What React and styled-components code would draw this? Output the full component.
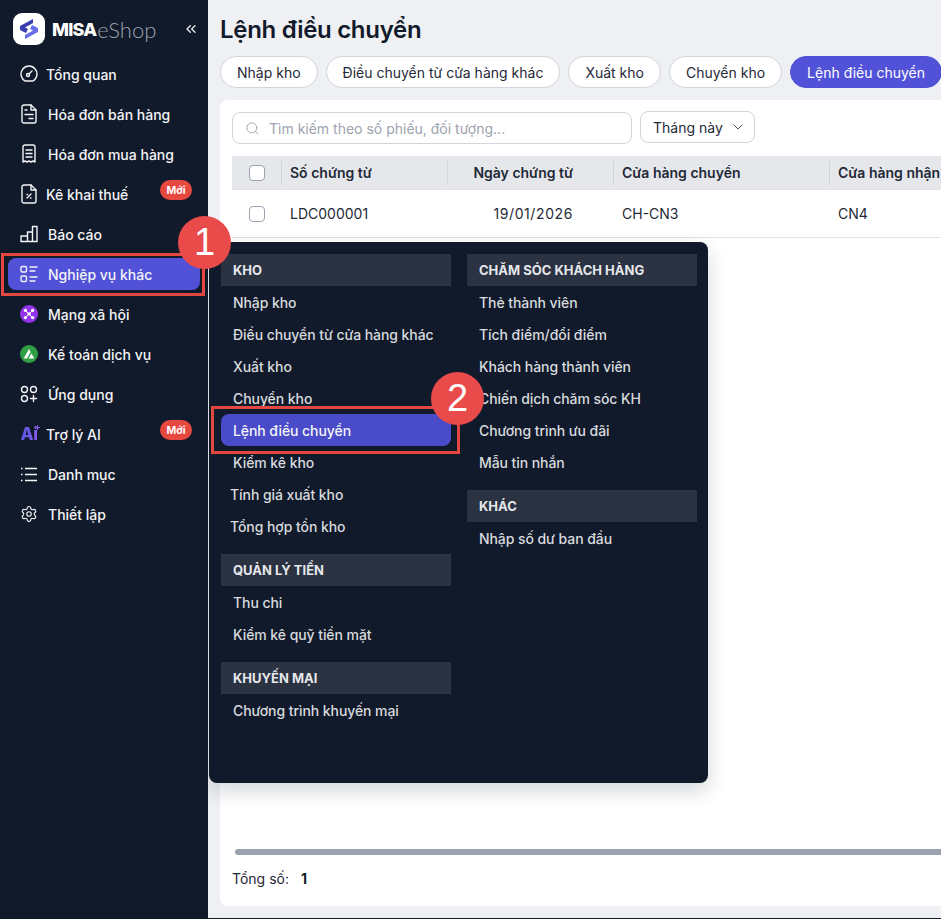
import React from "react";
import styled, { createGlobalStyle } from "styled-components";
import { ChevronDown, ChevronsLeft, Search, Settings } from "lucide-react";

const GlobalStyle = createGlobalStyle`
  html, body { margin: 0; padding: 0; background: #111a2b; }
  body { font-family: Inter, "Noto Sans", "Liberation Sans", sans-serif; overflow: hidden; }
  * { box-sizing: border-box; }
`;

const Page = styled.div`
  position: relative;
  display: flex;
  width: 941px;
  height: 919px;
  overflow: hidden;
  background: #111a2b;
`;

/* sidebar */
const Sidebar = styled.aside`
  width: 208px;
  flex: none;
  background: #111a2b;
  display: flex;
  flex-direction: column;
`;

const Brand = styled.div`
  height: 54px;
  padding: 13px 0 0 13px;
  display: flex;
  align-items: flex-start;
`;

const LogoBox = styled.div`
  width: 32px;
  height: 32px;
  border-radius: 9px;
  background: #fff;
  display: flex;
  align-items: center;
  justify-content: center;
  flex: none;
`;

const BrandName = styled.div`
  margin-left: 7px;
  height: 32px;
  display: flex;
  align-items: center;
  color: #fff;
  font-size: 18px;
  font-weight: 800;
  letter-spacing: -0.8px;
`;

const BrandLight = styled.span`
  margin-left: 1px;
  color: #9aa0aa;
  font-family: Lato, Inter, sans-serif;
  font-weight: 300;
  font-size: 22px;
  letter-spacing: 0;
`;

const Collapse = styled.div`
  margin-left: auto;
  margin-right: 9px;
  height: 32px;
  display: flex;
  align-items: center;
  color: #e5e7eb;
`;

const Nav = styled.nav`
  display: flex;
  flex-direction: column;
`;

const NavRow = styled.div`
  position: relative;
  height: 40px;
  padding: 4px 8px;
`;

const NavInner = styled.div`
  height: 32px;
  display: flex;
  align-items: center;
  padding-left: 12px;
  border-radius: 8px;
  color: #f3f4f6;
  font-size: 14px;
  font-weight: 500;
  background: ${(p) => (p.$active ? "#5152d8" : "transparent")};
`;

const NavIcon = styled.span`
  width: 18px;
  height: 20px;
  flex: none;
  display: flex;
  align-items: center;
  justify-content: center;
  margin-right: ${(p) => (p.$tight ? "8px" : "10px")};
`;

const NewBadge = styled.span`
  position: absolute;
  top: 6px;
  left: 160px;
  width: 32px;
  height: 20px;
  border-radius: 10px;
  background: #e8493f;
  color: #fff;
  font-size: 10.5px;
  font-weight: 700;
  display: flex;
  align-items: center;
  justify-content: center;
`;

const AiMark = styled.span`
  position: relative;
  font-size: 17px;
  font-weight: 800;
  letter-spacing: -0.5px;
  background: linear-gradient(90deg, #5558e0, #8b5cf0);
  -webkit-background-clip: text;
  background-clip: text;
  color: transparent;
`;

const AiSpark = styled.span`
  position: absolute;
  right: -3px;
  top: 1px;
  width: 5px;
  height: 5px;
  background:
    linear-gradient(#8b5cf0, #8b5cf0) center / 5px 1px no-repeat,
    linear-gradient(#8b5cf0, #8b5cf0) center / 1px 5px no-repeat;
`;

/* main */
const Main = styled.main`
  flex: none;
  width: 733px;
  height: 918px;
  background: #eff0f4;
  padding: 0 0 12px 12px;
  display: flex;
  flex-direction: column;
`;

const Title = styled.h1`
  margin: 0;
  height: 56px;
  padding-top: 15px;
  font-size: 24px;
  line-height: 30px;
  font-weight: 600;
  letter-spacing: -0.3px;
  color: #111a2b;
`;

const Tabs = styled.div`
  display: flex;
  gap: 8px;
  height: 32px;
  margin-bottom: 12px;
  white-space: nowrap;
`;

const Tab = styled.div`
  height: 32px;
  padding: 0 16px;
  border-radius: 16px;
  display: flex;
  align-items: center;
  font-size: 14px;
  font-weight: 400;
  flex: none;
  color: ${(p) => (p.$active ? "#fff" : "#1f2937")};
  background: ${(p) => (p.$active ? "#5152d8" : "#fff")};
  border: 1px solid ${(p) => (p.$active ? "#5152d8" : "#d1d5db")};
`;

const Panel = styled.section`
  flex: 1;
  width: 1000px;
  background: #fff;
  border-radius: 8px;
  padding: 12px;
  display: flex;
  flex-direction: column;
`;

const Toolbar = styled.div`
  display: flex;
  gap: 8px;
  height: 33px;
  margin-bottom: 11px;
`;

const SearchBox = styled.div`
  width: 400px;
  height: 32px;
  border: 1px solid #d1d5db;
  border-radius: 8px;
  display: flex;
  align-items: center;
  padding-left: 12px;
  gap: 9px;
  color: #9ca3af;
  font-size: 14px;
`;

const Period = styled.div`
  width: 115px;
  height: 32px;
  margin-top: -1px;
  border: 1px solid #d1d5db;
  border-radius: 8px;
  display: flex;
  align-items: center;
  padding-left: 12px;
  gap: 7px;
  font-size: 14px;
  color: #1f2937;
`;

const Row = styled.div`
  display: grid;
  grid-template-columns: 49px 166px 166px 216px 1fr;
  align-items: center;
  height: ${(p) => (p.$head ? "34px" : "48px")};
  background: ${(p) => (p.$head ? "#e5e7eb" : "#fff")};
  border-bottom: 1px solid #e0e2e6;
  font-size: 14px;
  color: #1f2937;
  font-weight: ${(p) => (p.$head ? 600 : 400)};
  white-space: nowrap;
`;

const Cell = styled.div`
  height: ${(p) => (p.$head ? "24px" : "auto")};
  display: flex;
  align-items: center;
  padding-left: 8px;
  border-left: ${(p) => (p.$head ? "1px solid #d1d5db" : "1px solid transparent")};
  justify-content: ${(p) => (p.$right ? "flex-end" : "flex-start")};
  padding-right: ${(p) => (p.$right ? "40px" : "0")};
  letter-spacing: ${(p) => (p.$wide ? "0.6px" : "0")};
`;

const CheckCell = styled.div`
  display: flex;
  justify-content: center;
`;

const Check = styled.span`
  width: 16px;
  height: 16px;
  border: 1px solid #9ca3af;
  border-radius: 4px;
  background: #fff;
`;

const Spacer = styled.div`
  flex: 1;
`;

const Scrollbar = styled.div`
  height: 6px;
  margin: 0 0 0 3px;
  background: #9ca3af;
  border-radius: 3px;
`;

const Total = styled.div`
  height: 39px;
  padding-top: 14px;
  font-size: 14px;
  color: #1f2937;
  display: flex;
  align-items: flex-start;
  line-height: 20px;
  gap: 12px;
`;

const TotalValue = styled.b`
  font-weight: 700;
  color: #111a2b;
`;

/* flyout menu */
const Flyout = styled.div`
  position: absolute;
  left: 209px;
  top: 242px;
  width: 499px;
  height: 541px;
  background: #111a2b;
  border-radius: 8px;
  box-shadow: 0 8px 20px rgba(17, 26, 43, 0.18);
  padding: 12px 11px 0 12px;
  display: grid;
  grid-template-columns: 230px 230px;
  column-gap: 16px;
  align-items: start;
`;

const MenuColumn = styled.div`
  display: flex;
  flex-direction: column;
  gap: 12px;
`;

const MenuGroup = styled.div`
  display: flex;
  flex-direction: column;
`;

const GroupTitle = styled.div`
  height: 32px;
  padding-left: 12px;
  display: flex;
  align-items: center;
  background: #2b3242;
  color: #e5e7eb;
  font-size: 13px;
  font-weight: 700;
`;

const MenuItem = styled.div`
  height: 32px;
  padding-left: ${(p) => (p.$shift ? "9px" : "12px")};
  display: flex;
  align-items: center;
  font-size: 14px;
  font-weight: 500;
  letter-spacing: -0.07px;
  color: ${(p) => (p.$active ? "#f3f4f6" : "#d8dade")};
  background: ${(p) => (p.$active ? "#4a4bc8" : "transparent")};
  border-radius: 8px;
  white-space: nowrap;
`;

/* annotations laid over the screenshot */
const Callout = styled.div`
  position: absolute;
  left: ${(p) => p.$x}px;
  top: ${(p) => p.$y}px;
  width: 53px;
  height: 53px;
  border-radius: 50%;
  background: #e94b4b;
  color: #fff;
  font-family: "Liberation Sans", Arial, sans-serif;
  font-size: 38px;
  display: flex;
  align-items: center;
  justify-content: center;
  z-index: 3;
`;

const Frame = styled.div`
  position: absolute;
  left: ${(p) => p.$x}px;
  top: ${(p) => p.$y}px;
  width: ${(p) => p.$w}px;
  height: ${(p) => p.$h}px;
  border: 3px solid #e2483f;
  z-index: 2;
`;

const stroke = {
  fill: "none",
  stroke: "#f3f4f6",
  strokeWidth: 1.4,
  strokeLinecap: "round",
  strokeLinejoin: "round",
};

const Gauge = () => (
  <svg width="18" height="18" viewBox="0 0 18 18" {...stroke}>
    <path d="M5 16a8 8 0 1 1 8 0z" />
    <circle cx="8" cy="10" r="1.500" />
    <path d="M9 9l3-3" />
  </svg>
);

const InvoiceSale = () => (
  <svg width="16" height="20" viewBox="0 0 16 20" {...stroke}>
    <path d="M3 1h7l5 5v11a2 2 0 0 1-2 2H3a2 2 0 0 1-2-2V3a2 2 0 0 1 2-2z" />
    <path d="M10 1v5h5M4 6h2M4 10.500h8M8 14.500h4" />
  </svg>
);

const InvoiceBuy = () => (
  <svg width="16" height="20" viewBox="0 0 16 20" {...stroke}>
    <path d="M2 18V3a2 2 0 0 1 2-2h8a2 2 0 0 1 2 2v15l-2-1-2 1-2-1-2 1-2-1z" />
    <path d="M5 6h6M5 9.500h6M5 13h6" />
  </svg>
);

const TaxFile = () => (
  <svg width="16" height="20" viewBox="0 0 16 20" {...stroke}>
    <path d="M3 1h7l5 5v11a2 2 0 0 1-2 2H3a2 2 0 0 1-2-2V3a2 2 0 0 1 2-2z" />
    <path d="M10 1v5h5M6 14l4-4M6 10.500h.5M9.500 14h.5" />
  </svg>
);

const Bars = () => (
  <svg width="18" height="18" viewBox="0 0 18 18" {...stroke}>
    <path d="M1 16.500h16V1.500h-4.500v15M12.500 7h-5v9.500M7.500 11H1v5.500" />
  </svg>
);

const Tasks = () => (
  <svg width="18" height="18" viewBox="0 0 18 18" {...stroke}>
    <rect x="1" y="1.500" width="5.500" height="5.500" rx="1.200" />
    <rect x="1" y="11" width="5.500" height="5.500" rx="1.200" />
    <path d="M10 2h7M10 6h5M10 12h7M10 16h5" />
  </svg>
);

const Social = () => (
  <svg width="20" height="20" viewBox="0 0 20 20">
    <circle cx="10" cy="10" r="10" fill="#9333ea" />
    <path d="M6 6l8 8M14 6l-8 8" stroke="#fff" strokeWidth="1" />
    <g fill="#fff">
      <circle cx="10" cy="10" r="2" />
      <circle cx="6" cy="6" r="1.800" />
      <circle cx="14" cy="6" r="1.800" />
      <circle cx="6" cy="14" r="1.800" />
      <circle cx="14" cy="14" r="1.800" />
    </g>
  </svg>
);

const Accounting = () => (
  <svg width="20" height="20" viewBox="0 0 20 20">
    <circle cx="10" cy="10" r="10" fill="#2f9e44" />
    <path d="M4 15L10 4.500l1.800 3.200L7.800 15z" fill="#fff" />
    <path d="M9.500 15l3.200-5.500 3.200 5.500z" fill="#fff" />
  </svg>
);

const Apps = () => (
  <svg width="18" height="18" viewBox="0 0 18 18" {...stroke}>
    <circle cx="4.500" cy="4.500" r="3" />
    <circle cx="13.500" cy="4.500" r="3" />
    <circle cx="4.500" cy="13.500" r="3" />
    <path d="M13.500 10.500v6M10.500 13.500h6" />
  </svg>
);

const ListLines = () => (
  <svg width="18" height="18" viewBox="0 0 18 18" fill="none" stroke="#f8f9fa" strokeWidth="1.500">
    <path d="M5 3.500h12M5 9.500h12M5 15.500h12M1 3.500h1.500M1 9.500h1.500M1 15.500h1.500" />
  </svg>
);

const Logo = () => (
  <svg width="22" height="22" viewBox="0 0 22 22">
    <path d="M15 1L2 8v4l6 3 2-4-3-1.500L15 5z" fill="#3a3db0" />
    <path d="M7 21l13-7v-4l-6-3-2 4 3 1.500L7 17z" fill="#6a6ee8" />
  </svg>
);

const navItems = [
  { label: "Tổng quan", icon: <Gauge />, tight: true },
  { label: "Hóa đơn bán hàng", icon: <InvoiceSale /> },
  { label: "Hóa đơn mua hàng", icon: <InvoiceBuy /> },
  { label: "Kê khai thuế", icon: <TaxFile />, tight: true, badge: true },
  { label: "Báo cáo", icon: <Bars /> },
  { label: "Nghiệp vụ khác", icon: <Tasks />, active: true },
  { label: "Mạng xã hội", icon: <Social /> },
  { label: "Kế toán dịch vụ", icon: <Accounting /> },
  { label: "Ứng dụng", icon: <Apps /> },
  { label: "Trợ lý AI", icon: <AiMark>Ai<AiSpark /></AiMark>, tight: true, badge: true },
  { label: "Danh mục", icon: <ListLines /> },
  { label: "Thiết lập", icon: <Settings size={18} color="#f3f4f6" strokeWidth={1.5} /> },
];

const tabs = ["Nhập kho", "Điều chuyển từ cửa hàng khác", "Xuất kho", "Chuyển kho", "Lệnh điều chuyển"];

const leftMenu = [
  {
    title: "KHO",
    items: [
      { label: "Nhập kho" },
      { label: "Điều chuyển từ cửa hàng khác" },
      { label: "Xuất kho" },
      { label: "Chuyển kho" },
      { label: "Lệnh điều chuyển", active: true },
      { label: "Kiểm kê kho" },
      { label: "Tính giá xuất kho", shift: true },
      { label: "Tổng hợp tồn kho", shift: true },
    ],
  },
  { title: "QUẢN LÝ TIỀN", items: [{ label: "Thu chi" }, { label: "Kiểm kê quỹ tiền mặt" }] },
  { title: "KHUYẾN MẠI", items: [{ label: "Chương trình khuyến mại" }] },
];

const rightMenu = [
  {
    title: "CHĂM SÓC KHÁCH HÀNG",
    items: [
      { label: "Thẻ thành viên" },
      { label: "Tích điểm/đổi điểm" },
      { label: "Khách hàng thành viên" },
      { label: "Chiến dịch chăm sóc KH" },
      { label: "Chương trình ưu đãi" },
      { label: "Mẫu tin nhắn" },
    ],
  },
  { title: "KHÁC", items: [{ label: "Nhập số dư ban đầu" }] },
];

function MenuGroups({ groups }) {
  return (
    <MenuColumn>
      {groups.map((group) => (
        <MenuGroup key={group.title}>
          <GroupTitle>{group.title}</GroupTitle>
          {group.items.map((item) => (
            <MenuItem key={item.label} $active={item.active} $shift={item.shift}>
              {item.label}
            </MenuItem>
          ))}
        </MenuGroup>
      ))}
    </MenuColumn>
  );
}

export default function App() {
  return (
    <Page>
      <GlobalStyle />
      <Sidebar>
        <Brand>
          <LogoBox>
            <Logo />
          </LogoBox>
          <BrandName>
            MISA<BrandLight>eShop</BrandLight>
          </BrandName>
          <Collapse>
            <ChevronsLeft size={16} strokeWidth={2} />
          </Collapse>
        </Brand>
        <Nav>
          {navItems.map((item) => (
            <NavRow key={item.label}>
              <NavInner $active={item.active}>
                <NavIcon $tight={item.tight}>{item.icon}</NavIcon>
                {item.label}
              </NavInner>
              {item.badge && <NewBadge>Mới</NewBadge>}
            </NavRow>
          ))}
        </Nav>
      </Sidebar>

      <Main>
        <Title>Lệnh điều chuyển</Title>
        <Tabs>
          {tabs.map((tab) => (
            <Tab key={tab} $active={tab === "Lệnh điều chuyển"}>
              {tab}
            </Tab>
          ))}
        </Tabs>
        <Panel>
          <Toolbar>
            <SearchBox>
              <Search size={15} color="#9ca3af" strokeWidth={1.5} />
              Tìm kiếm theo số phiếu, đối tượng...
            </SearchBox>
            <Period>
              Tháng này
              <ChevronDown size={16} color="#4b5563" strokeWidth={1.5} />
            </Period>
          </Toolbar>
          <Row $head>
            <CheckCell>
              <Check />
            </CheckCell>
            <Cell $head>Số chứng từ</Cell>
            <Cell $head $right>Ngày chứng từ</Cell>
            <Cell $head>Cửa hàng chuyển</Cell>
            <Cell $head>Cửa hàng nhận</Cell>
          </Row>
          <Row>
            <CheckCell>
              <Check />
            </CheckCell>
            <Cell>LDC000001</Cell>
            <Cell $right $wide>19/01/2026</Cell>
            <Cell>CH-CN3</Cell>
            <Cell>CN4</Cell>
          </Row>
          <Spacer />
          <Scrollbar />
          <Total>
            Tổng số: <TotalValue>1</TotalValue>
          </Total>
        </Panel>
      </Main>

      <Flyout>
        <MenuGroups groups={leftMenu} />
        <MenuGroups groups={rightMenu} />
      </Flyout>

      <Frame $x={1} $y={253} $w={204} $h={43} />
      <Frame $x={211} $y={406} $w={249} $h={48} />
      <Callout $x={178} $y={216}>1</Callout>
      <Callout $x={431} $y={372}>2</Callout>
    </Page>
  );
}
